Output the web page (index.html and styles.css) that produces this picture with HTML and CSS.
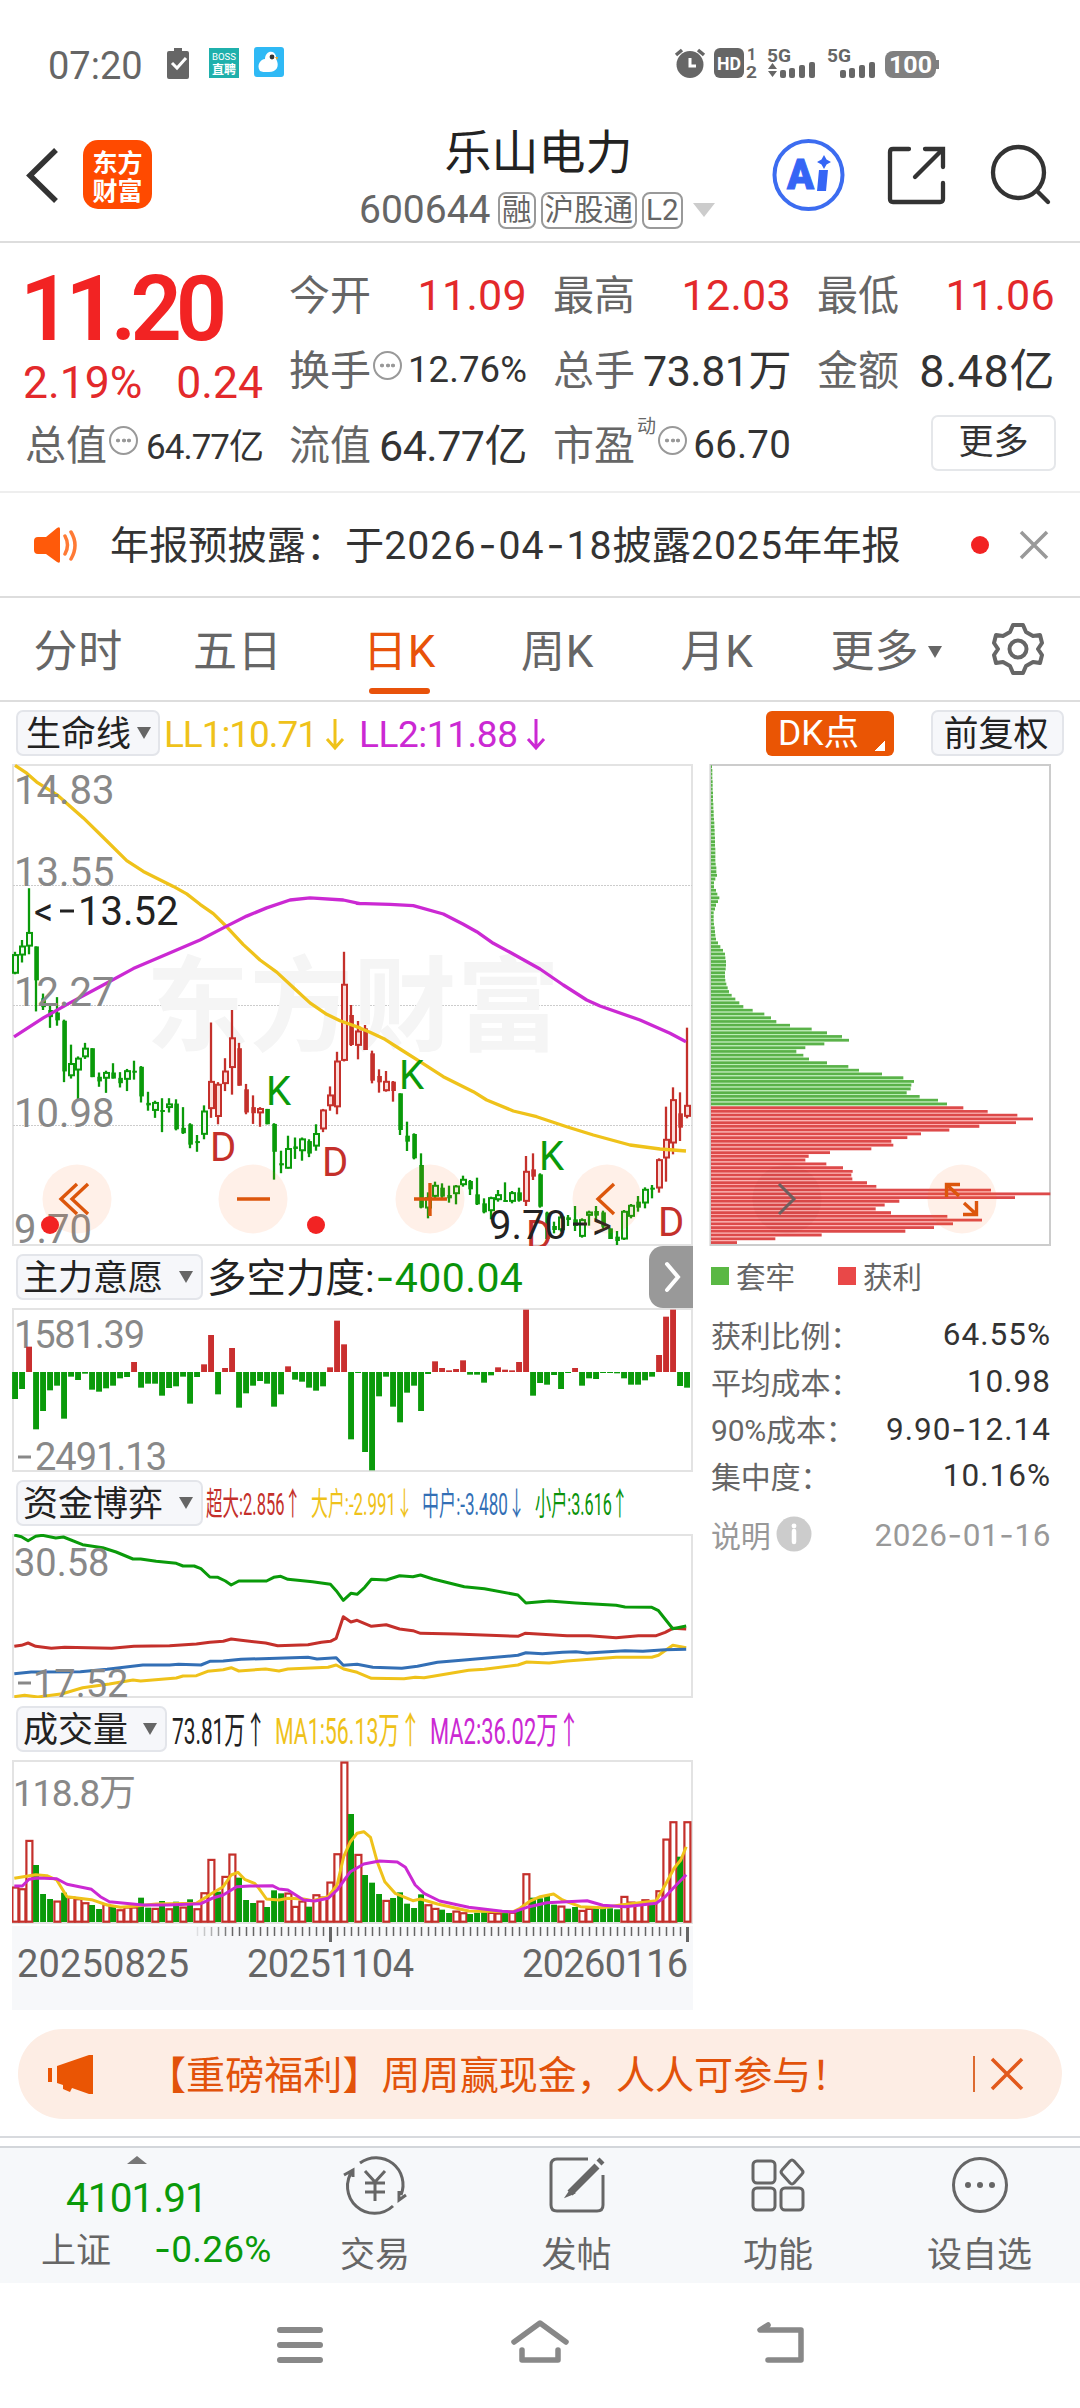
FILE: index.html
```html
<!DOCTYPE html>
<html lang="zh-CN">
<head>
<meta charset="utf-8">
<title>乐山电力 600644</title>
<link rel="stylesheet" href="styles.css">
</head>
<body>
<div class="status">
  <span class="clock">07:20</span>
  <svg class="st-left" width="120" height="36" viewBox="166 46 120 36">
    <path d="M169 51h5v-3h8v3h5a2 2 0 0 1 2 2v24a2 2 0 0 1-2 2h-18a2 2 0 0 1-2-2V53a2 2 0 0 1 2-2z" fill="#666"/>
    <path d="M172 63l5 5 9-10" fill="none" stroke="#fff" stroke-width="3"/>
    <rect x="209" y="48" width="30" height="30" fill="#1fb0ac"/>
    <text x="212" y="60" font-size="9" textLength="24" lengthAdjust="spacingAndGlyphs" fill="#fff">BOSS</text>
    <text x="212" y="74" font-size="12" font-weight="700" fill="#fff">直聘</text>
    <rect x="254" y="47" width="30" height="30" rx="3" fill="#2fb9f5"/>
    <path d="M260 71c-4-6 1-12 5-12 0-8 9-10 11-3 0 2 0 3 1 5 2 5 0 11-8 11-5 0-7 0-9-1z" fill="#fff"/>
    <circle cx="272" cy="57" r="2.4" fill="#333"/><path d="M275 57l3 0-1 3z" fill="#f6a623"/>
  </svg>
  <svg class="st-right" width="266" height="36" viewBox="674 46 266 36">
    <g fill="#666">
      <circle cx="690" cy="64.500" r="13.5"/>
      <path d="M676 55l6-5M704 55l-6-5" fill="none" stroke="#666" stroke-width="3.500"/>
      <path d="M690 58v8h6" fill="none" stroke="#fff" stroke-width="3"/>
      <rect x="714" y="48" width="30" height="30" rx="6"/>
      <text x="717" y="69.500" font-size="18" font-weight="700" textLength="24" lengthAdjust="spacingAndGlyphs" fill="#fff">HD</text>
      <text x="747" y="60" font-size="16" font-weight="700">1</text>
      <text x="746" y="77.500" font-size="16" font-weight="700" textLength="11" lengthAdjust="spacingAndGlyphs">2</text>
      <text x="767" y="62" font-size="19" font-weight="700" textLength="24" lengthAdjust="spacingAndGlyphs">5G</text>
      <text x="827" y="62" font-size="19" font-weight="700" textLength="24" lengthAdjust="spacingAndGlyphs">5G</text>
      <path d="M768 69l4.500-6 4.500 6zM768 71l4.500 6 4.500-6z"/>
      <rect x="780" y="70" width="6" height="8" rx="2"/><rect x="789" y="68" width="6" height="10" rx="2"/><rect x="799" y="65" width="6" height="13" rx="2"/><rect x="809" y="62" width="6" height="16" rx="2"/>
      <rect x="840" y="70" width="6" height="8" rx="2"/><rect x="849" y="68" width="6" height="10" rx="2"/><rect x="859" y="65" width="6" height="13" rx="2"/><rect x="869" y="62" width="6" height="16" rx="2"/>
      <rect x="885" y="51" width="51" height="27" rx="8" fill="#808080"/><rect x="936" y="60" width="3" height="9" fill="#808080"/>
      <text x="889" y="73" font-size="23" font-weight="700" textLength="43" lengthAdjust="spacingAndGlyphs" fill="#fff">100</text>
    </g>
  </svg>
</div>

<header class="header">
  <div class="head-left">
    <svg width="36" height="60" viewBox="25 145 36 60"><path d="M56 150L30 175.500 56 201" fill="none" stroke="#333" stroke-width="5.500"/></svg>
    <div class="logo"><span>东方</span><span>财富</span></div>
  </div>
  <div class="head-mid">
    <h1>乐山电力</h1>
    <div class="sub"><span class="code">600644</span><i class="tag">融</i><i class="tag tag-w">沪股通</i><i class="tag">L2</i><b class="tri tri-l"></b></div>
  </div>
  <svg class="head-right" width="290" height="80" viewBox="770 135 290 80">
    <circle cx="808.500" cy="175" r="34" fill="none" stroke="#3c6cf0" stroke-width="4"/>
    <text x="787" y="188.500" font-size="42" font-weight="900" textLength="27" lengthAdjust="spacingAndGlyphs" fill="#3565f5" stroke="#3565f5">A</text>
    <path d="M819 170h9l-2 21h-9z" fill="#3565f5"/><path d="M824 155l2.500 4.500 4.500 2.500-4.500 2.500-2.500 4.500-2.500-4.500-4.500-2.500 4.500-2.500z" fill="#3565f5"/>
    <g fill="none" stroke="#333" stroke-width="4.300" stroke-linecap="round">
      <path d="M909 149h-16q-3 0-3 3v47q0 3 3 3h47q3 0 3-3v-16M925 149h18v18M943 149l-28 28"/>
      <circle cx="1018.500" cy="172.500" r="25.500"/><path d="M1037 191l11 11"/>
    </g>
  </svg>
</header>

<section class="quote">
  <div class="q-left">
    <div class="price">11.20</div>
    <div class="chg"><span>2.19%</span><span>0.24</span></div>
    <div class="cell"><span class="k">总值</span><i class="dots"></i><span class="v xs">64.77亿</span></div>
  </div>
  <div class="q-grid">
    <div class="cell"><span class="k">今开</span><span class="v red">11.09</span></div>
    <div class="cell"><span class="k">最高</span><span class="v red">12.03</span></div>
    <div class="cell"><span class="k">最低</span><span class="v red">11.06</span></div>
    <div class="cell"><span class="k">换手</span><i class="dots"></i><span class="v s">12.76%</span></div>
    <div class="cell"><span class="k">总手</span><span class="v c">73.81万</span></div>
    <div class="cell"><span class="k">金额</span><span class="v c wide">8.48亿</span></div>
    <div class="cell"><span class="k">流值</span><span class="v c">64.77亿</span></div>
    <div class="cell"><span class="k">市盈</span><sup>动</sup><i class="dots"></i><span class="v m">66.70</span></div>
    <div class="cell end"><span class="more">更多</span></div>
  </div>
</section>

<section class="notice">
  <svg width="46" height="38" viewBox="33 525 46 38"><path d="M34 540q0-4 4-4h8l11-9q3-2 3 1v32q0 3-3 1l-11-8h-8q-4 0-4-4z" fill="#ff5a0a"/><path d="M65 535q5 9 0 18M71 531q8 13 0 27" fill="none" stroke="#ff7a35" stroke-width="3.500" stroke-linecap="round"/></svg>
  <p>年报预披露：于<span class="num">2026<i class="dash">-</i>04<i class="dash">-</i>18</span>披露<span class="num">2025</span>年年报</p>
  <b class="dot"></b>
  <svg width="30" height="30" viewBox="0 0 30 30"><path d="M2 2l26 26M28 2L2 28" stroke="#999" stroke-width="3.500"/></svg>
</section>

<nav class="tabs">
  <span>分时</span><span>五日</span><span class="on">日K</span><span>周K</span><span>月K</span><span class="mo">更多<b class="tri"></b></span>
  <svg width="56" height="56" viewBox="-28 -28 56 56"><path fill="none" stroke="#666" stroke-width="4" stroke-linejoin="round" d="M-5-24H5L8-17 15-13 22-14 24-6 20 0 24 6 22 14 15 13 8 17 5 24H-5L-8 17-15 13-22 14-24 6-20 0-24-6-22-14-15-13-8-17z"/><circle r="8.500" fill="none" stroke="#666" stroke-width="4"/></svg>
</nav>

<div class="ind">
  <span class="pill p-life"><span>生命线</span><b class="tri"></b></span>
  <svg width="390" height="46" viewBox="165 710 390 46" font-size="37">
    <text x="165" y="747" fill="#efc21a" textLength="154">LL1:10.71</text><path d="M336 719v28M328 739l8 9 8-9" fill="none" stroke="#efc21a" stroke-width="3"/>
    <text x="360" y="747" fill="#cb29d3" textLength="159">LL2:11.88</text><path d="M537 719v28M529 739l8 9 8-9" fill="none" stroke="#cb29d3" stroke-width="3"/>
  </svg>
  <span class="dk">DK点</span>
  <span class="pill p-fq"><span>前复权</span></span>
</div>

<main class="charts">
  <div class="col-l">
    <svg id="main" width="681" height="482" viewBox="12 764 681 482"></svg>
    <div class="row">
      <span class="pill"><span>主力意愿</span><b class="tri"></b></span>
      <span class="force">多空力度:</span><span class="force-v"><i class="dash">-</i>400.04</span>
      <span class="side"><svg width="20" height="32" viewBox="0 0 20 32"><path d="M4 3l11 13L4 29" fill="none" stroke="#fff" stroke-width="4" stroke-linecap="round"/></svg></span>
    </div>
    <svg id="force" width="681" height="164" viewBox="12 1308 681 164"></svg>
    <div class="row">
      <span class="pill"><span>资金博弈</span><b class="tri"></b></span>
      <svg class="vals" width="424" height="46" viewBox="206 1480 424 46" font-size="32">
        <text x="206" y="1515" fill="#c4302b" textLength="95" lengthAdjust="spacingAndGlyphs">超大:2.856↑</text>
        <text x="311" y="1515" fill="#efc21a" textLength="102" lengthAdjust="spacingAndGlyphs">大户:-2.991↓</text>
        <text x="422" y="1515" fill="#336fb5" textLength="103" lengthAdjust="spacingAndGlyphs">中户:-3.480↓</text>
        <text x="535" y="1515" fill="#0a930a" textLength="93" lengthAdjust="spacingAndGlyphs">小户:3.616↑</text>
      </svg>
    </div>
    <svg id="fund" width="681" height="164" viewBox="12 1534 681 164"></svg>
    <div class="row">
      <span class="pill p-vol"><span>成交量</span><b class="tri"></b></span>
      <svg class="vals" width="410" height="46" viewBox="173 1706 410 46" font-size="37">
        <text x="173" y="1744" fill="#222" textLength="94" lengthAdjust="spacingAndGlyphs">73.81万↑</text>
        <text x="276" y="1744" fill="#efc21a" textLength="146" lengthAdjust="spacingAndGlyphs">MA1:56.13万↑</text>
        <text x="431" y="1744" fill="#cb29d3" textLength="150" lengthAdjust="spacingAndGlyphs">MA2:36.02万↑</text>
      </svg>
    </div>
    <svg id="vol" width="681" height="164" viewBox="12 1760 681 164"></svg>
    <svg id="axis" width="681" height="86" viewBox="12 1924 681 86"></svg>
  </div>
  <aside class="col-r">
    <svg id="chips" width="342" height="482" viewBox="709 764 342 482"></svg>
    <div class="legend"><b class="g"></b><span>套牢</span><b class="r"></b><span>获利</span></div>
    <dl>
      <div><dt>获利比例：</dt><dd>64.55%</dd></div>
      <div><dt>平均成本：</dt><dd>10.98</dd></div>
      <div><dt>90%成本：</dt><dd>9.90<i class="dash">-</i>12.14</dd></div>
      <div><dt>集中度：</dt><dd>10.16%</dd></div>
      <div class="note"><dt>说明<svg width="36" height="36" viewBox="-18 -18 36 36"><circle r="17.500" fill="#ccc"/><circle cy="-8" r="2.400" fill="#fff"/><path d="M0-3V8" stroke="#fff" stroke-width="4.500" stroke-linecap="round"/></svg></dt><dd>2026<i class="dash">-</i>01<i class="dash">-</i>16</dd></div>
    </dl>
  </aside>
</main>

<div class="banner">
  <svg width="48" height="42" viewBox="47 2052 48 42" fill="#ea5504"><path d="M48 2067h4v14h-4zM57 2065l32-11h4v39h-4l-17-6-2 4-7-3v-4l-6-2z"/></svg>
  <p>【重磅福利】周周赢现金，人人可参与！</p>
  <b class="sep"></b>
  <svg width="34" height="34" viewBox="0 0 34 34"><path d="M2 2l30 30M32 2L2 32" stroke="#e2591c" stroke-width="3.500"/></svg>
</div>

<footer class="bar">
  <div class="index"><b class="up"></b><div class="pt">4101.91</div><div class="ln"><span>上证</span><em><i class="dash">-</i>0.26%</em></div></div>
  <div class="item"><svg width="66" height="62" viewBox="-33 -31 66 62" fill="none" stroke="#666" stroke-width="3"><path d="M-15-22A27 27 0 0 1 26 10M18 21A27 27 0 0 1-22-15M-31-10l9-5v7M31 10l-7 5V6"/><path d="M-10-14L0-3 10-14M0-3V16M-10-2H10M-10 7H10"/></svg><span>交易</span></div>
  <div class="item"><svg width="62" height="62" viewBox="-31 -31 62 62" fill="none" stroke="#666" stroke-width="3"><path d="M11-26H-20q-6 0-6 6V20q0 6 6 6H20q6 0 6-6V-10"/><path d="M20-19L-7 8" stroke-width="7"/><path d="M-5 4l-4 6 7-3" fill="#666"/><path d="M22-22l3-3" stroke-width="7"/></svg><span>发帖</span></div>
  <div class="item"><svg width="62" height="62" viewBox="-31 -31 62 62" fill="none" stroke="#666" stroke-width="3"><rect x="-25" y="-24" width="22" height="22" rx="4"/><rect x="-25" y="3" width="22" height="22" rx="4"/><rect x="3" y="3" width="22" height="22" rx="4"/><path d="M12-24q2-2 4 0l8 9q2 2 0 4l-8 9q-2 2-4 0l-8-9q-2-2 0-4z"/></svg><span>功能</span></div>
  <div class="item"><svg width="62" height="62" viewBox="-31 -31 62 62" fill="none" stroke="#666" stroke-width="3"><circle r="26.500"/><g fill="#666" stroke="none"><circle cx="-12" r="3"/><circle r="3"/><circle cx="12" r="3"/></g></svg><span>设自选</span></div>
</footer>

<div class="sysnav">
  <svg width="540" height="50" viewBox="270 2317 540 50" fill="none" stroke="#888" stroke-width="6" stroke-linecap="round" stroke-linejoin="round">
    <path d="M280 2330h40M280 2345h40M280 2360h40"/>
    <path d="M514 2342l26-19 26 19" stroke-width="5.500"/><path d="M522 2350v10h36v-10" stroke-width="5.500"/>
    <path d="M768 2325l-8 5h41v30h-33" stroke-width="5.500"/>
  </svg>
</div>
<script src="chart.js"></script>
</body>
</html>
```
FILE: styles.css
```css
* { box-sizing: border-box; margin: 0; padding: 0; }
body { width: 1080px; height: 2408px; background: #fff; color: #333; font-family: Roboto, "Noto Sans CJK SC", sans-serif; overflow: hidden; }
svg { display: block; flex: none; }
svg text { font-family: Roboto, "Noto Sans CJK SC", sans-serif; }
i, em { font-style: normal; }
.dash { font-family: Inter, sans-serif; }
.tri { display: inline-block; border: 7px solid transparent; border-top: 12px solid #666; border-bottom: 0; }

.status { height: 106px; display: flex; align-items: flex-start; padding: 46px 0 0 48px; color: #666; }
.clock { width: 118px; font-size: 38px; line-height: 40px; }
.st-right { margin-left: 388px; }

.header { height: 137px; border-bottom: 2px solid #ddd; display: grid; grid-template-columns: 340px 400px 340px; align-items: center; }
.head-left { display: flex; align-items: center; padding: 2px 0 0 25px; gap: 22px; }
.logo { width: 69px; height: 69px; border-radius: 15px; background: #ff4a00; color: #fff; display: flex; flex-direction: column; align-items: center; justify-content: center; font: 700 25px/28px "Noto Sans CJK SC", sans-serif; }
.head-mid { text-align: center; padding-top: 13px; }
h1 { font-size: 47px; font-weight: 400; line-height: 60px; height: 60px; color: #222; margin-right: 3px; }
.sub { display: flex; align-items: center; height: 54px; color: #666; padding-left: 19px; }
.code { font-size: 39px; width: 139px; text-align: left; }
.tag { height: 37px; line-height: 33px; border: 2px solid #999; border-radius: 8px; font-size: 29.5px; padding: 0 2px; margin-right: 5px; }
.tri-l { border-width: 14px 11px 0; border-top-color: #ccc; margin-left: 5px; }
.head-right { margin: 2px 0 0 30px; }

.quote { height: 250px; padding: 14px 26px 0 25px; display: flex; gap: 27px; border-bottom: 2px solid #eee; }
.q-left { width: 237px; }
.price { height: 102px; line-height: 106px; font-size: 90px; font-weight: 600; letter-spacing: -6px; color: #f22323; margin-left: -5px; }
.chg { height: 46px; line-height: 48px; margin: 0 -1px 2px -2px; font-size: 44.5px; color: #e3292b; display: flex; justify-content: space-between; letter-spacing: 0; }
.q-grid { display: grid; grid-template-columns: repeat(3, 237px); grid-auto-rows: 75px; column-gap: 27px; }
.cell { height: 75px; display: flex; align-items: center; }
.k { font-size: 41px; color: #666; margin-top: -5px; }
.v { margin-left: auto; font-size: 43px; letter-spacing: -.5px; margin-right: -1px; color: #333; white-space: nowrap; }
.v.red { color: #e3292b; letter-spacing: .3px; }
.v.c { margin-top: -5px; }
.v.wide { font-size: 45px; letter-spacing: .6px; }
.v.s { font-size: 36.5px; letter-spacing: .1px; }
.v.xs { font-size: 35px; letter-spacing: -1px; margin-top: -3px; }
.v.m { font-size: 38.5px; letter-spacing: .2px; }
.end { justify-content: flex-end; }
.more { width: 125px; height: 56px; border: 2px solid #e5e7ea; border-radius: 7px; text-align: center; font-size: 35px; line-height: 51px; margin: -4px -2px 0 0; }
sup { font-size: 19px; color: #666; align-self: flex-start; margin: 4px 0 0 2px; }
.dots { width: 29px; height: 29px; margin: -8px 0 0 2px; border: 2px solid #999; border-radius: 50%; background: radial-gradient(circle, #999 1.7px, transparent 2.2px) center / 6px 30px no-repeat, radial-gradient(circle, #999 1.7px, transparent 2.2px) 4px center / 6px 30px no-repeat, radial-gradient(circle, #999 1.7px, transparent 2.2px) 15px center / 6px 30px no-repeat; }

.notice { height: 105px; border-bottom: 2px solid #ddd; display: flex; align-items: center; padding: 0 31px 0 33px; }
.notice p { margin: -5px 0 0 31px; width: 800px; font-size: 39.2px; white-space: nowrap; color: #333; }
.notice .num { letter-spacing: 1px; }
.notice .dash { letter-spacing: 2px; padding-left: 2px; }
.dot { width: 18px; height: 18px; border-radius: 50%; background: #f22323; margin: 0 auto 0 61px; }

.tabs { height: 104px; border-bottom: 2px solid #ddd; display: grid; grid-template-columns: 159.500px 159.500px 161px 158px 161px 154px 1fr; align-items: center; font-size: 44px; color: #666; }
.tabs > span { text-align: center; line-height: 108px; height: 102px; white-space: nowrap; letter-spacing: .8px; padding-right: 3px; }
.tabs svg { margin: 0 0 1px 37px; }
.tabs .on { color: #e8520a; display: flex; flex-direction: column; align-items: center; padding-right: 0; }
.tabs .on::after { content: ""; width: 61px; height: 6px; border-radius: 3px; background: #e8520a; margin-top: -18px; }
.mo .tri { margin: 0 0 9px 9px; }
.tabs .mo { padding-left: 20px; letter-spacing: 0; padding-right: 0; }

.ind { height: 62px; display: flex; align-items: center; padding-left: 16px; }
.pill { height: 46px; width: 187px; border: 2px solid #e3e5ea; border-radius: 7px; background: #f6f7fa; font-size: 35px; line-height: 40px; color: #222; display: flex; align-items: center; justify-content: space-between; padding: 0 8px 0 5px; white-space: nowrap; }
.pill span { margin-top: 3px; }
.p-life { width: 144px; padding: 0 7px 0 8px; margin-right: 4px; }
.p-fq { width: 133px; margin-left: 37px; justify-content: center; }
.p-vol { width: 151px; }
.dk { width: 128px; height: 45px; margin-left: 212px; border-radius: 6px; background: linear-gradient(135deg, transparent 50%, #fff 50%) 109px 29px / 10px 11px no-repeat #ea5504; color: #fff; font-size: 35.5px; line-height: 45px; padding-left: 12px; white-space: nowrap; }

.charts { display: flex; height: 1246px; padding-left: 12px; }
.col-l { width: 681px; }
.row { height: 62px; display: flex; align-items: center; padding-left: 4px; }
.vals { margin-left: 3px; }
.p-vol + .vals { margin-left: 5px; }
.force { font-size: 39.500px; color: #222; margin: -6px 0 0 4px; white-space: nowrap; }
.force-v { font-size: 41px; color: #0a930a; margin-left: 1px; letter-spacing: .4px; }
.side { width: 44px; height: 62px; margin-left: auto; background: #999; border-radius: 14px 0 0 14px; display: flex; align-items: center; padding-left: 14px; }
.col-r { margin-left: 16px; width: 342px; }
.legend { height: 60px; display: flex; align-items: center; font-size: 29.500px; color: #666; padding-left: 2px; }
.legend span { margin-top: -3px; }
.legend b { width: 18px; height: 18px; margin-right: 7px; }
.legend .g { background: #5ab844; }
.legend .r { background: #e94848; margin-left: 43px; }
dl { padding-left: 2px; }
dl div { display: flex; justify-content: space-between; align-items: center; height: 47px; font-size: 30px; color: #666; }
dl div:first-child { margin-top: 5px; }
dt { letter-spacing: -.2px; margin-top: -2px; }
dd { font-size: 31.5px; color: #333; letter-spacing: 1px; margin-right: 0; }
dl .note { color: #999; margin-top: 12px; }
.note dt { display: flex; align-items: center; gap: 5px; }
.note dd { color: #999; letter-spacing: .6px; }

.banner { margin: 19px 18px 17px; height: 90px; border-radius: 45px; background: #fdede4; color: #e2520a; display: flex; align-items: center; padding: 0 38px 0 29px; }
.banner p { font-size: 39.100px; margin: -5px 0 0 52px; white-space: nowrap; }
.sep { width: 2px; height: 36px; background: #dd6a30; margin: 0 15px 0 auto; }
.bar { height: 147px; border-top: 2px solid #d8dade; display: grid; grid-template-columns: 274px 202px 201px 202px 201px; background: linear-gradient(#fff 8px, #d3d6da 8px, #d3d6da 10px, #f6f8fa 10px); }
.index { padding-top: 18px; color: #0a9a0a; }
.up { display: block; width: 0; margin: 0 0 0 127px; border: 10px solid transparent; border-bottom: 8px solid #777; border-top: 0; }
.pt { font-size: 40.5px; line-height: 50px; margin: 9px 0 0 66px; letter-spacing: -.9px; }
.ln { display: flex; align-items: center; height: 44px; font-size: 35px; padding-left: 41px; color: #666; margin-top: 3px; }
.ln span { margin-top: -1px; }
.ln em { margin-left: 43px; color: #0a9a0a; font-size: 37px; letter-spacing: .2px; }
.item { display: flex; flex-direction: column; align-items: center; padding-top: 16px; font-size: 35px; color: #666; }
.item span { margin-top: 20px; line-height: 40px; }
.sysnav { height: 124px; padding: 34px 0 0 270px; }
```
FILE: chart.js
```js
const NS = 'http://www.w3.org/2000/svg';
const GREEN = '#0a9a0a', RED = '#c4302b', YELLOW = '#efc21a', PURPLE = '#cb29d3', BLUE = '#336fb5';
const $ = id => document.getElementById(id);
function el(parent, tag, attrs, text) {
  const n = document.createElementNS(NS, tag);
  for (const k in attrs) n.setAttribute(k, attrs[k]);
  if (text) n.textContent = text;
  parent.appendChild(n);
  return n;
}
const label = (p, x, y, s, size = 38, len, fill = '#888') => el(p, 'text', Object.assign({ x, y, 'font-size': size, fill }, len ? { textLength: len } : {}), s);
const frame = (p, x, y, w, h, c = '#e3e3e3') => el(p, 'rect', { x, y, width: w, height: h, fill: 'none', stroke: c, 'stroke-width': 2 });
const cx = i => 15 + 7 * i;
// Map flat "x,y x,y" lists onto the plot area
const map = (s, ox, oy, kx, ky) => s.trim().split(/\s+/).map(p => { const [x, y] = p.split(',').map(Number); return [(ox + x / kx).toFixed(1), (oy + y / ky).toFixed(1)].join(','); }).join(' ');
const line = (p, points, stroke, w = 3.3) => el(p, 'polyline', { points, fill: 'none', stroke, 'stroke-width': w, 'stroke-linejoin': 'round' });

// ---- price chart ----
const m = $('main');
frame(m, 13, 765, 679, 480);
for (const y of [885.5, 1005.5, 1125.5]) el(m, 'path', { d: `M13 ${y}H692`, stroke: '#ccc', 'stroke-width': 1, 'stroke-dasharray': '2 1' });
el(m, 'text', { x: 146, y: 1043, 'font-size': 103, 'font-weight': 700, fill: '#f5f5f5', textLength: 414 }, '东方财富');

// kind (g/r filled, G/R hollow), high, body top, body bottom, low
const early = `G 705 712 766 768|G 672 688 715 735|G 527 650 690 712|g 690 690 785 872|g 822 835 860 868|g 855 868 888 918|g 832 875 897 912|g 895 898 1040 1070|G 965 1017 1053 1060|G 998 1002 1037 1118|G 960 974 1000 1005|g 975 975 1056 1056|g 1043 1055 1068 1083|G 1038 1042 1060 1100|g 1017 1043 1060 1060|g 1042 1058 1073 1085|G 1033 1037 1063 1095|g 1010 1038 1042 1063|g 1025 1027 1110 1127|g 1097 1128 1135 1150|G 1122 1126 1150 1170|g 1115 1148 1152 1210|G 1115 1130 1142 1155|g 1118 1130 1202 1205|g 1140 1198 1213 1215|g 1185 1188 1245 1255|g 1218 1235 1240 1265|G 1135 1150 1217 1230|R 903 1067 1145 1170|R 1070 1075 1167 1188|R 1003 1038 1075 1095|R 868 945 1030 1105|r 960 975 1080 1080|r 1075 1090 1155 1160|r 1107 1140 1157 1187|R 1140 1143 1157 1195|g 1145 1145 1188 1188|g 1185 1187 1265 1343|g 1262 1297 1303 1325|G 1220 1255 1312 1312|g 1225 1250 1257 1285|G 1225 1228 1263 1290|g 1230 1235 1270 1280|G 1188 1213 1250 1262|R 1145 1147 1202 1210|R 1082 1105 1137 1150|R 985 1010 1140 1160|R 705 795 1010 1012`;
const late = `r 735 765 855 858|R 783 812 857 898|r 795 805 870 870|r 872 880 962 970|r 928 948 967 998|R 933 963 993 995|r 963 965 993 1025|g 1000 1000 1110 1125|g 1085 1127 1145 1173|g 1120 1122 1195 1198|g 1180 1215 1343 1345|G 1297 1312 1345 1375|G 1265 1275 1310 1320|g 1270 1283 1310 1315|g 1277 1305 1315 1328|G 1275 1277 1302 1333|G 1247 1257 1275 1280|g 1260 1263 1288 1305|g 1253 1303 1333 1335|g 1315 1330 1357 1360|G 1310 1312 1353 1378|G 1290 1303 1320 1325|g 1267 1320 1325 1325|G 1293 1297 1325 1330|g 1283 1297 1322 1325|R 1188 1233 1325 1338|r 1180 1228 1250 1260|g 1240 1243 1340 1343|g 1355 1358 1437 1437|g 1385 1398 1410 1420|G 1365 1370 1410 1415|g 1365 1372 1380 1398|g 1338 1378 1398 1413|G 1375 1378 1430 1433|G 1352 1355 1367 1397|g 1338 1353 1367 1383|g 1352 1357 1400 1405|g 1405 1405 1437 1437|g 1413 1430 1443 1455|G 1350 1353 1438 1440|G 1332 1335 1370 1375|g 1308 1325 1343 1355|G 1282 1287 1330 1345|g 1275 1283 1288 1315|R 1195 1198 1285 1298|R 1040 1137 1195 1265|R 982 1018 1150 1183|r 997 1060 1103 1143|R 803 1035 1070 1075`;
const candles = [...early.split('|').map(s => [s, 700, 2.8]), ...late.split('|').map(s => [s, 760, 3])];
candles.forEach(([s, o, k], i) => {
  const f = s.split(' '), [h, a, b, l] = f.slice(1).map(v => o + v / k), x = cx(i);
  const c = f[0].toLowerCase() === 'g' ? GREEN : RED, hollow = f[0] < 'a';
  el(m, 'path', { d: `M${x} ${h}V${l}`, stroke: c, 'stroke-width': 2.3 });
  if (hollow) el(m, 'rect', { x: x - 2, y: a + .8, width: 5, height: Math.max(2, b - a - 1.6), fill: c === RED ? '#fbdcda' : '#eefaee', stroke: c, 'stroke-width': 2 });
  else el(m, 'rect', { x: x - 1.7, y: a, width: 4.6, height: Math.max(2, b - a), fill: c });
});
line(m, map('45,183 80,205 110,230 170,265 250,330 310,385 380,450 430,480 520,522 560,543 600,572 640,598 680,635 730,685 780,728 830,762 880,805 930,848 980,880 1020,898 1080,918', 0, 700, 3, 2.8) + ' ' + map('50,800 90,817 135,838 180,867 240,905 310,950 400,995 440,1020 520,1053 590,1070 680,1100 760,1125 870,1155 960,1167 1038,1173', 340, 760, 3, 3), YELLOW);
line(m, map('42,943 130,890 200,853 300,803 400,752 500,712 600,672 680,633 740,605 800,582 870,560 930,554 1030,560 1080,570', 0, 700, 3, 2.8) + ' ' + map('50,430 150,433 220,437 310,462 370,493 410,515 460,550 510,577 600,627 670,675 740,720 780,738 900,780 990,820 1038,845', 340, 760, 3, 3), PURPLE);
[[804, '14.83'], [886, '13.55'], [1006, '12.27'], [1127, '10.98'], [1243, '9.70']].forEach(([y, s]) => label(m, 14, y, s, 40));
label(m, 34, 925, '<', 38, 0, '#222'); el(m, 'path', { d: 'M60 911H74', stroke: '#222', 'stroke-width': 3 });
label(m, 78, 925, '13.52', 40, 0, '#222');
[[210, 1161, 'D'], [266, 1105, 'K'], [322, 1176, 'D'], [399, 1089, 'K'], [539, 1170, 'K'], [526, 1249, 'D'], [658, 1236, 'D']].forEach(([x, y, s]) => label(m, x, y, s, 40, 0, s === 'D' ? RED : GREEN));
label(m, 489, 1239, '9.70', 40, 0, '#222'); el(m, 'path', { d: 'M573 1224H587', stroke: '#222', 'stroke-width': 3 });
label(m, 592, 1239, '>', 38, 0, '#222');
const disc = (p, x, c = '#ff6a1a', o = .1) => el(p, 'circle', { cx: x, cy: 1199, r: 34.5, fill: c, 'fill-opacity': o });
const glyph = (p, d, c = '#dc560c', w = 3.4) => el(p, 'path', { d, fill: 'none', stroke: c, 'stroke-width': w });
[77, 253, 430, 607].forEach(x => disc(m, x));
glyph(m, 'M77 1184L61 1199 77 1214M88 1184L72 1199 88 1214');
glyph(m, 'M237 1199H270'); glyph(m, 'M414 1199H447M430 1183V1216'); glyph(m, 'M614 1184L598 1199 614 1214');
[50, 316].forEach(x => el(m, 'circle', { cx: x, cy: 1225, r: 9, fill: '#f22323' }));

// ---- chip distribution ----
const c = $('chips');
const chip = [65,66,66,66,67,67,67,68,68,68,69,69,70,70,71,72,72,73,73,74,74,74,75,75,75,75,76,78,78,80,75,71,71,77,81,87,83,77,74,70,70,70,71,73,74,75,77,83,90,98,104,105,107,107,106,104,104,105,108,112,116,124,135,147,159,187,222,242,258,299,364,410,455,476,402,345,318,339,356,410,474,506,575,639,671,663,661,649,688,743,770,819,892,981,1028,977,867,777,692,651,603,609,543,419,355,345,408,458,487,483,486,530,558,902,1080,974,627,583,556,602,771,875,788,731,645,394,255,140];
frame(c, 710.5, 765, 339.5, 480, '#ccc');
chip.forEach((v, i) => {
  const y = 766.7 + 3.747 * i, w = (v - 62) / 3, next = Math.min(w, ((chip[i + 1] || 62) - 62) / 3);
  el(c, 'rect', { x: 711, y: y - 1.4, width: w, height: 2.8, fill: i < 91 ? '#5ab249' : '#dd4a4a' });
  el(c, 'rect', { x: 711, y: y + 1.4, width: next, height: .95, fill: i < 91 ? '#b4edae' : '#ffa9a9' });
});
disc(c, 787, '#803030', .05); disc(c, 962);
glyph(c, 'M779 1184L794 1199 779 1214', '#6d6060', 3);
glyph(c, 'M960 1184.500H946.500V1197M947 1185L959 1196M963 1214.500H976.500V1201M976 1214L964 1203');

// ---- buy/sell force ----
const f = $('force');
frame(f, 13, 1309, 679, 162);
label(f, 14, 1348, '1581.39', 38, 131); label(f, 35, 1470, '2491.13', 38, 132);
el(f, 'path', { d: 'M18 1457H31', stroke: '#888', 'stroke-width': 3 });
[477,447,320,568,513,451,437,536,410,420,401,449,455,445,437,415,411,366,443,431,431,467,444,439,410,491,411,373,285,463,384,324,503,460,437,423,431,500,463,379,419,425,443,452,439,382,242,313,598,397,636,691,469,410,500,547,458,437,513,402,364,384,391,387,361,404,404,428,406,382,389,391,366,209,467,429,434,405,447,398,384,437,415,417,398,398,400,415,434,434,421,410,345,230,209,438,443].forEach((v, i) => {
  const y = 1240 + v / 3;
  el(f, 'rect', { x: cx(i) - 2.9, y: Math.min(y, 1372), width: 5.9, height: Math.max(1, Math.abs(y - 1372)), fill: y < 1372 ? '#c92f2f' : '#0a9a0a' });
});

// ---- fund flow ----
const u = $('fund');
frame(u, 13, 1535, 679, 162);
const fl = (s, col) => line(u, map(s, 0, 1480, 2.24, 3), col, 3);
fl('32,650 55,646 85,651 140,641 185,623 245,612 298,600 315,603 395,594 410,588 440,587 465,574 500,569 518,563 535,573 595,567 625,573 645,567 735,562 753,555 770,567 800,577 832,595 905,596 930,592 950,593 1050,571 1085,568 1160,555 1180,546 1230,549 1270,543 1380,532 1460,532 1475,526 1507,496 1537,503', YELLOW);
fl('32,581 70,576 180,575 240,568 320,555 380,555 400,553 450,555 470,544 500,543 540,538 690,532 710,537 753,533 769,556 800,553 835,562 900,565 935,559 980,547 1040,540 1160,526 1178,518 1215,521 1260,517 1290,515 1315,519 1400,512 1440,514 1490,509 1537,508', BLUE);
fl('32,499 48,496 63,489 80,499 115,505 145,502 250,505 300,499 380,497 440,492 470,487 500,484 518,477 540,481 595,489 622,497 690,494 720,487 740,484 753,475 769,410 786,426 800,421 832,439 865,434 895,447 925,452 942,460 1020,462 1160,469 1176,460 1270,467 1320,467 1380,473 1430,467 1470,467 1490,457 1507,445 1537,447', RED);
fl('32,165 48,170 63,182 80,169 95,166 125,174 142,171 185,194 230,203 260,216 298,237 315,237 350,244 395,250 410,258 435,258 450,266 470,291 488,292 505,303 518,315 535,303 597,303 613,292 629,289 645,298 700,305 740,313 753,332 769,361 786,340 800,343 817,322 832,298 865,300 895,287 925,290 942,285 970,297 1040,320 1085,326 1160,345 1178,369 1230,363 1290,369 1380,376 1400,381 1460,382 1475,392 1507,446 1537,438', GREEN);
label(u, 14, 1576, '30.58', 38); label(u, 33, 1697, '17.52', 38);
el(u, 'path', { d: 'M18 1683H31', stroke: '#888', 'stroke-width': 3 });

// ---- volume ----
const v = $('vol');
frame(v, 13, 1761, 679, 162);
'r410 r415 r270 g345 g432 g447 r452 g428 r440 r445 r457 g465 g477 r462 g470 r478 r470 r470 g443 g473 r474 g453 r475 g455 r470 g448 r475 r427 r327 g425 r378 r311 g383 g450 g459 r452 g471 g421 g430 r428 r468 r452 g470 r433 r440 r395 r310 r35 g192 r312 g375 g398 g432 r450 g444 g427 g461 g474 g433 r463 r474 g479 g489 r482 r487 g492 g488 g487 r486 r488 g487 r486 g480 r370 g443 g445 g437 g464 r467 g476 g471 r480 r474 g473 g474 g475 g478 r438 r455 r460 r448 g463 r421 r266 r214 g320 r214'.split(' ').forEach((s, i) => {
  const y = 1750 + s.slice(1) / 3, x = cx(i);
  if (s[0] === 'g') el(v, 'rect', { x: x - 2.9, y, width: 5.9, height: 1922 - y, fill: GREEN });
  else el(v, 'rect', { x: x - 2.6, y: y + .9, width: 6, height: 1920.8 - y, fill: '#fff', stroke: RED, 'stroke-width': 2.2 });
});
line(v, map('32,385 80,374 105,377 127,390 150,440 205,449 240,465 270,472 300,469 350,462 440,460 475,430 500,410 518,375 533,367 548,388 570,400 580,415 597,447 625,450 645,445 680,447 700,452 735,440 755,405 770,320 785,275 800,250 815,245 830,262 845,335 862,395 885,430 925,452 942,447 980,462 1050,483 1150,485 1165,475 1185,455 1210,440 1240,432 1260,450 1300,470 1350,473 1390,465 1470,452 1490,405 1510,355 1525,330 1537,290', 0, 1750, 2.24, 3), YELLOW, 3);
line(v, map('32,408 50,408 65,388 85,384 127,386 150,403 205,418 225,440 245,455 320,465 375,465 450,461 475,445 500,435 530,410 560,408 610,407 625,417 645,420 680,450 705,453 735,445 755,420 785,365 815,342 850,333 890,336 908,352 930,405 950,430 985,453 1050,472 1125,484 1150,486 1180,472 1225,458 1315,452 1350,466 1400,470 1470,460 1490,440 1510,412 1537,374', 0, 1750, 2.24, 3), PURPLE, 3);
label(v, 13, 1806, '118.8万', 37, 123);

// ---- date axis ----
const a = $('axis');
el(a, 'rect', { x: 12, y: 1926, width: 681, height: 84, fill: '#f7f8fa' });
for (let i = 26; i < 97; i++) {
  const major = i === 45 || i === 96;
  el(a, 'path', { d: `M${cx(i) + .5} 1927V${major ? 1942 : 1936}`, stroke: '#666', 'stroke-width': major ? 3 : 1.5, 'stroke-opacity': Math.min(1, (i - 25) / 6) });
}
[[17, '20250825', 172], [247, '20251104', 167], [522, '20260116', 166]].forEach(([x, s, w]) => label(a, x, 1977, s, 38, w, '#666'));
```
